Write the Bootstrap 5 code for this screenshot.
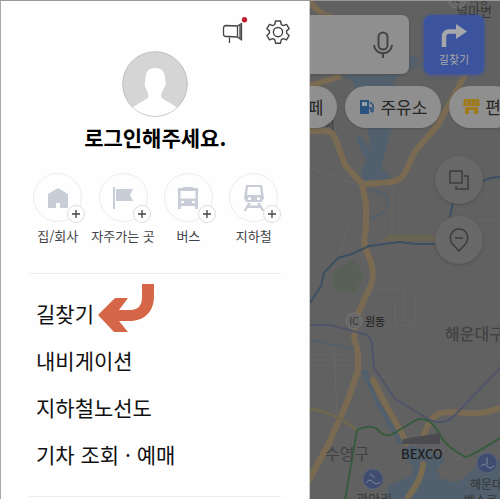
<!DOCTYPE html>
<html lang="ko">
<head>
<meta charset="utf-8">
<meta name="viewport" content="width=device-width, initial-scale=1">
<title>지도 메뉴</title>
<link href="https://cdn.jsdelivr.net/npm/bootstrap@5.3.0/dist/css/bootstrap.min.css" rel="stylesheet">
<style>
body{font-family:"Noto Sans CJK KR","Noto Sans",sans-serif;background:#616161;color:#111;overflow-x:hidden}
svg{display:block;flex-shrink:0}
.app-frame{min-height:100vh;border-top:1px solid #999;border-left:1px solid #aaa}
.drawer{width:62%;background:#fefefe;border-right:1px solid #ccc;padding:14px 28px 0}
.icon-btn{border:0;background:none;padding:0;color:#444}
.tool-row{gap:18px;height:34px;margin:0 -9px 2px 0}
.avatar{width:66px;height:66px}
.login-title{font-size:21px;line-height:32px;font-weight:700;margin:4px 0 20px;color:#000}
.shortcut-row{margin:0 -5px 0 -4px}
.shortcut{font-size:13px;line-height:20px;color:#3f4246;white-space:nowrap}
.disc{width:49px;height:49px;border:1px solid #ececee;color:#c9cdd8}
.plus{right:-4px;bottom:-2px;width:18px;height:18px;background:#fff;border:1px solid #ddd;color:#444}
.menu-list{border-top:1px solid #eee;border-bottom:1px solid #eee;margin-top:27px;padding:16px 7px 18px}
.menu-list a{font-size:21px;line-height:47px;height:47px;color:#111}
.hint-arrow{margin:-7px 0 -7px 4px}
.map-pane{min-width:0;background:#616161}
.map-art{inset:0;width:100%;height:100%}
.search-row{padding:14px 16px 0 0;gap:15px}
.search-box{height:59px;background:#8f8f8f;border-radius:0 7px 7px 0;padding-right:16px;color:#3b3b3b;box-shadow:0 1px 3px #4448;min-width:0}
.search-box input{min-width:0;background:none;border:0;outline:0}
.route-btn{width:60px;height:59px;flex-shrink:0;border:0;border-radius:7px;background:#3c549d;color:#a5a7aa;font-size:11px;line-height:14px;padding:0;box-shadow:0 1px 4px #3c549d}
.chip-row{margin-top:12px;gap:8px}
.chip{height:42px;border:0;border-radius:21px;background:#8f8f8f;color:#252525;font-size:17px;line-height:24px;padding:0 14px;gap:5px;white-space:nowrap;flex-shrink:0;box-shadow:0 1px 2px #4446}
.chip.cut-left{border-radius:0 21px 21px 0;padding-left:0;width:27px;justify-content:flex-end}
.fab-col{gap:12px;padding:28px 17px 0 0}
.fab{width:48px;height:48px;border:0;background:#686868;color:#3c3c3c;box-shadow:0 1px 3px #4449}
</style>
</head>
<body>
<div class="app-frame d-flex">
  <aside class="drawer flex-shrink-0">
    <div class="tool-row d-flex justify-content-end">
      <button class="icon-btn" aria-label="공지">
        <svg width="26" height="30" viewBox="0 0 26 30" fill="none" stroke="currentColor" stroke-width="1.3" stroke-linejoin="round"><path d="M15.500 9L4 8.500Q1.500 8.500 1.500 11v6q0 2.500 2.500 2.500h2.500l9 .5M15.500 9l4-2.500v16.500l-4-3zM15.500 9v11M18 8v14M7.500 20v6"/><circle cx="22.500" cy="2.700" r="2.700" fill="#c12231" stroke="none"/></svg>
      </button>
      <button class="icon-btn" aria-label="설정">
        <svg width="24" height="32" viewBox="0 -4 24 32" fill="none" stroke="currentColor" stroke-width="1.400" stroke-linejoin="round"><path d="M9.500 1h5l.8 3.500 2 1.100 3.200-1.200 2.600 4.300-2.500 2.200v2.400l2.500 2.200-2.600 4.300-3.200-1.200-2 1.100-.8 3.500h-5l-.8-3.500-2-1.100-3.200 1.200L.9 15.500l2.500-2.200v-2.400L.9 8.700l2.600-4.300 3.200 1.200 2-1.100z"/><circle cx="12" cy="12.100" r="4.600"/></svg>
      </button>
    </div>
    <div class="text-center">
      <svg class="avatar mx-auto" viewBox="0 0 66 66"><defs><clipPath id="face"><circle cx="33" cy="33" r="32"/></clipPath></defs><circle cx="33" cy="33" r="32.300" fill="#d5d5d5" stroke="#bdbdbd"/><path clip-path="url(#face)" fill="#fff" d="M33 17c7 0 10 4 10 10l.5 4c1 4-2 6-3 9-1 2-2 5-1 7l15 9v12H11V56l15-9c1-2 0-5-1-7-1-3-3-5-2-9l.5-4c0-6 3-10 9.500-10z"/></svg>
      <h1 class="login-title">로그인해주세요.</h1>
    </div>
    <nav class="shortcut-row d-flex text-center" aria-label="바로가기">
      <a href="#" class="col shortcut text-decoration-none"><span class="disc rounded-circle d-flex align-items-center justify-content-center position-relative mx-auto mb-1"><svg width="22" height="22" viewBox="0 0 22 22" fill="currentColor"><path d="M11 1L1 7v14h8v-5h4v5h8V7z"/></svg><span class="plus position-absolute rounded-circle d-flex align-items-center justify-content-center"><svg width="10" height="10" viewBox="0 0 10 10" stroke="currentColor" stroke-width="1.300"><path d="M5 1v8M1 5h8"/></svg></span></span>집/회사</a>
      <a href="#" class="col shortcut text-decoration-none"><span class="disc rounded-circle d-flex align-items-center justify-content-center position-relative mx-auto mb-1"><svg width="22" height="24" viewBox="0 0 22 24" fill="currentColor"><path d="M1 1h2v22H1zM4 3h17l-3 6 3 6H4z"/></svg><span class="plus position-absolute rounded-circle d-flex align-items-center justify-content-center"><svg width="10" height="10" viewBox="0 0 10 10" stroke="currentColor" stroke-width="1.300"><path d="M5 1v8M1 5h8"/></svg></span></span>자주가는 곳</a>
      <a href="#" class="col shortcut text-decoration-none"><span class="disc rounded-circle d-flex align-items-center justify-content-center position-relative mx-auto mb-1"><svg width="22" height="24" viewBox="0 0 22 24" fill="currentColor" fill-rule="evenodd"><path d="M6 1h10v1h5v21h-3v-3H4v3H1V2h5zM3.500 5v7.500h15V5zM4 15v2h3v-2zm11 0v2h3v-2z"/></svg><span class="plus position-absolute rounded-circle d-flex align-items-center justify-content-center"><svg width="10" height="10" viewBox="0 0 10 10" stroke="currentColor" stroke-width="1.300"><path d="M5 1v8M1 5h8"/></svg></span></span>버스</a>
      <a href="#" class="col shortcut text-decoration-none"><span class="disc rounded-circle d-flex align-items-center justify-content-center position-relative mx-auto mb-1"><svg width="22" height="26" viewBox="0 0 22 26" fill="currentColor" fill-rule="evenodd"><path d="M3 0h16l2 13-2 4H3l-2-4zM5 2L4 10h14L17 2zM5 12.500v2.500h3v-2.500zm9 0v2.500h3v-2.500zM5 18h3l-1.500 2.500h9L14 18h3l4.500 8H19l-1.700-3H4.700L3 26H.5z"/></svg><span class="plus position-absolute rounded-circle d-flex align-items-center justify-content-center"><svg width="10" height="10" viewBox="0 0 10 10" stroke="currentColor" stroke-width="1.300"><path d="M5 1v8M1 5h8"/></svg></span></span>지하철</a>
    </nav>
    <nav class="menu-list d-flex flex-column" aria-label="메뉴">
      <a href="#" class="d-flex align-items-center text-decoration-none">길찾기<svg class="hint-arrow" width="56" height="60" viewBox="0 0 56 60" fill="#d56748"><path d="M44 0h12v12c0 16-10 25-24 25H21l9 11H16L0 31l17-17h13l-9 12h12c7 0 11-5 11-12z"/></svg></a>
      <a href="#" class="text-decoration-none">내비게이션</a>
      <a href="#" class="text-decoration-none">지하철노선도</a>
      <a href="#" class="text-decoration-none">기차 조회 · 예매</a>
    </nav>
  </aside>
  <main class="map-pane flex-grow-1 position-relative overflow-hidden">
    <svg class="map-art position-absolute" viewBox="310 1 190 498" preserveAspectRatio="xMinYMin slice" fill="none" stroke-linecap="round" stroke-linejoin="round" font-family="'Noto Sans CJK KR',sans-serif">
      <g fill="#51606c">
        <path d="M340 75l12 5 8 20 8 30 2 20-10-15-4 5 10 20-6 14 6 8 14 1 12-7-11-7 9-35 12-24-8-30 25-20-4-5-30 20z"/>
        <path d="M361 370l6-1 10 30 30 42-8 4-24-42z"/>
        <path d="M382 500l8-15 21-9 2-10-13-15 12-6 27 9 6 5-8 11 3 8 16 5 11-8 14-13 23-4v42z"/>
      </g>
      <path d="M335 270l18-10 11 13-9 20-21-3-1-14z" fill="#596055"/>
      <path d="M390 235h47v6h-57z" fill="#6a6453"/>
      <g stroke="#696969">
        <path d="M310 168l45 16M340 250l8-25 14-18M392 190v45M372 290h32v30M450 220h45M310 355h35M334 345l3 70M310 365h45M395 300v25h20v-30M360 472h35M445 470l15-13"/>
      </g>
      <path d="M370 190c25 2 22 19 2 29M310 340l45 9M378 85l44-22" stroke="#52606b" stroke-width="2"/>
      <g stroke="#7a6a51" stroke-width="6">
        <path d="M310 1q8 14 24 17M310 86l28-9M310 131h16q8 1 10 9l9 25 17 19 4 20v24q-4 16 1 24c9 20 7 29-1 44L356 318l-2 20 4 14v18l-10 30-20 45-19 35"/>
        <path d="M362 184l30-2c16-4 15-18 24-32l22-25 28-52 11-43M373 380l14 27 20 36M423 464q0 13-15 33M500 408c-20 8-33 5-50 4-20 0-22 14-27 25"/>
      </g>
      <path d="M310 409q22 2 47 21" stroke="#6e6850" stroke-width="3"/>
      <path d="M310 303l11-17 3-13 14-15 14-4 17-8 31-4 15 2h40M450 217l3-15M483 181q7-4 17-4" stroke="#3d4f62" stroke-width="2"/>
      <path d="M310 325h20l34 9q7 2 8 10l2 24 21 31 30 18q18 12 31-3l44-46" stroke="#505468" stroke-width="2"/>
      <path d="M345 500l12-70q15-7 22 1 8 8 17 1l20-12q14-5 24 15c5 10 12 14 25 22q5 0 35-19" stroke="#365c3d" stroke-width="2"/>
      <path d="M403 439l37-6v11h-38z" fill="#4c4c50"/>
      <circle cx="354" cy="321" r="8" fill="#686868" stroke="#767676"/>
      <g fill="#404c70" stroke="#56627f"><circle cx="373" cy="479" r="10"/><circle cx="487" cy="463" r="10"/></g>
      <path d="M367 482q3-4 6 0t7 0M370 474l4 3M481 466q3-4 6 0t7 0M487 458v6" stroke="#858b9a"/>
      <circle cx="457" cy="-1" r="9" fill="#686868" stroke="#767676"/>
      <g fill="#363636">
        <text x="354" y="325" font-size="10" text-anchor="middle">IC</text>
        <text x="365" y="326" font-size="11" font-weight="500" fill="#282828">원동</text>
        <text x="445" y="340" font-size="16" font-weight="500" fill="#434343">해운대구</text>
        <text x="325" y="460" font-size="16" fill="#434343">수영구</text>
        <text x="401" y="459" font-size="13" font-weight="500" fill="#202020">BEXCO</text>
        <text x="470" y="489" font-size="12">해운대</text>
        <text x="464" y="505" font-size="12">벡스코</text>
        <text x="356" y="504" font-size="13">광안리</text>
        <text x="325" y="129" font-size="10">서</text>
        <text x="452" y="3" font-size="9">IC</text>
        <text x="470" y="4" font-size="10">지장</text>
        <text x="456" y="16" font-size="13">널마변</text>
      </g>
    </svg>
    <div class="position-relative">
      <div class="search-row d-flex">
        <div class="search-box d-flex align-items-center flex-grow-1 overflow-hidden">
          <input type="text" class="flex-grow-1 w-50" aria-label="검색">
          <button class="icon-btn" aria-label="음성 검색"><svg width="20" height="28" viewBox="0 0 20 28" fill="none" stroke="currentColor" stroke-width="2"><rect x="5.500" y="1.500" width="9" height="17" rx="4.500"/><path d="M1 14c1 11 17 11 18 0M10 22v5"/></svg></button>
        </div>
        <button class="route-btn d-flex flex-column align-items-center justify-content-center gap-1"><svg width="26" height="24" viewBox="0 0 26 24"><path d="M3 23V13q0-5.500 5.500-5.500H17" fill="none" stroke="currentColor" stroke-width="4.500"/><path d="M15 0l11 7.500L15 15z" fill="currentColor"/></svg>길찾기</button>
      </div>
      <div class="chip-row d-flex">
        <button class="chip cut-left d-flex align-items-center">페</button>
        <button class="chip d-flex align-items-center"><svg width="16" height="16" viewBox="0 0 16 16"><path d="M1 1h9v14H1z" fill="#29527e"/><path d="M3 3h5v4H3z" fill="#929aa2"/><path d="M10 9h2v3q1 2 2 0V6l-3-3" fill="none" stroke="#29527e" stroke-width="1.500"/></svg>주유소</button>
        <button class="chip d-flex align-items-center"><svg width="17" height="16" viewBox="0 0 17 16" fill="#a17a1c"><path d="M1 0h15l1 7H0zM2 8h13v7h-4v-4H6v4H2z"/><path d="M4 1v5M8.500 1v5M13 1v5" stroke="#8f8460"/></svg>편</button>
      </div>
      <div class="fab-col d-flex flex-column align-items-end">
        <button class="fab rounded-circle d-flex align-items-center justify-content-center p-0" aria-label="지도 종류"><svg width="20" height="20" viewBox="0 0 20 20" fill="none" stroke="currentColor" stroke-width="1.500"><path d="M1 1h12v12H1zM15 6h4v13H7v-3"/></svg></button>
        <button class="fab rounded-circle d-flex align-items-center justify-content-center p-0" aria-label="장소"><svg width="20" height="24" viewBox="0 0 20 24" fill="none" stroke="currentColor" stroke-width="1.500"><path d="M10 23L3.500 16C-1 10 2 1 10 1s11 9 6.500 15zM6 10h8"/></svg></button>
      </div>
    </div>
  </main>
</div>
<script src="https://cdn.jsdelivr.net/npm/bootstrap@5.3.0/dist/js/bootstrap.bundle.min.js"></script>
</body>
</html>
